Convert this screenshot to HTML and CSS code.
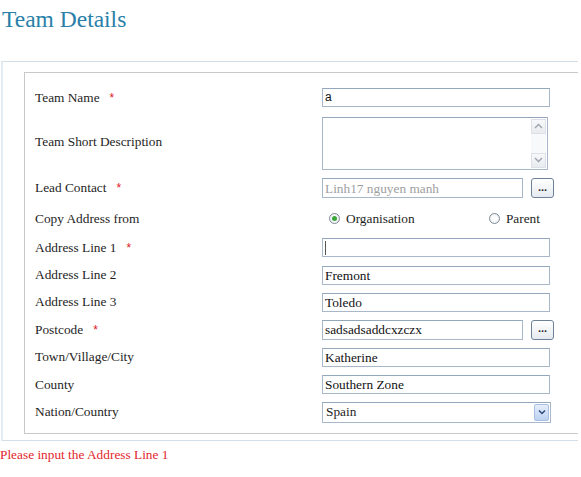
FILE: index.html
```html
<!DOCTYPE html>
<html>
<head>
<meta charset="utf-8">
<title>Team Details</title>
<link rel="stylesheet" href="styles.css">
</head>
<body>
<h1 class="title">Team Details</h1>
<div class="panel">
  <div class="inner">
    <div class="form">
      <div class="label">Team Name<span class="req">*</span></div>
      <div class="ctrl"><div class="field sans">a</div></div>

      <div class="label">Team Short Description</div>
      <div class="ctrl">
        <div class="textarea">
          <div class="scrollbar">
            <span class="sbtn"><svg width="9" height="6" viewBox="0 0 9 6"><path d="M1 5 L4.5 1.5 L8 5" fill="none" stroke="#9aa3ad" stroke-width="1.3"/></svg></span>
            <span class="sbtn"><svg width="9" height="6" viewBox="0 0 9 6"><path d="M1 1 L4.5 4.5 L8 1" fill="none" stroke="#9aa3ad" stroke-width="1.3"/></svg></span>
          </div>
        </div>
      </div>

      <div class="label">Lead Contact<span class="req">*</span></div>
      <div class="ctrl">
        <div class="field short muted">Linh17 nguyen manh</div>
        <button class="pick">...</button>
      </div>

      <div class="label">Copy Address from</div>
      <div class="ctrl">
        <div class="radios">
          <span class="ropt"><span class="radio on"></span>Organisation</span>
          <span class="ropt"><span class="radio"></span>Parent</span>
        </div>
      </div>

      <div class="label">Address Line 1<span class="req">*</span></div>
      <div class="ctrl"><div class="field"><span class="caret"></span></div></div>

      <div class="label">Address Line 2</div>
      <div class="ctrl"><div class="field">Fremont</div></div>

      <div class="label">Address Line 3</div>
      <div class="ctrl"><div class="field">Toledo</div></div>

      <div class="label">Postcode<span class="req">*</span></div>
      <div class="ctrl">
        <div class="field short">sadsadsaddcxzczx</div>
        <button class="pick">...</button>
      </div>

      <div class="label">Town/Village/City</div>
      <div class="ctrl"><div class="field">Katherine</div></div>

      <div class="label">County</div>
      <div class="ctrl"><div class="field">Southern Zone</div></div>

      <div class="label">Nation/Country</div>
      <div class="ctrl">
        <div class="select">
          <span class="sval">Spain</span>
          <span class="drop"><svg width="8" height="6" viewBox="0 0 8 6"><path d="M1 1.5 L4 4.5 L7 1.5" fill="none" stroke="#2c4a7a" stroke-width="1.5"/></svg></span>
        </div>
      </div>
    </div>
  </div>
</div>
<p class="error">Please input the Address Line 1</p>
</body>
</html>
```
FILE: styles.css
```css
* { box-sizing: border-box; }
body {
  margin: 0;
  font-family: "Liberation Serif", "Times New Roman", serif;
  font-size: 13.33px;
  color: #1e1e1e;
  background: #fff;
  width: 581px;
  overflow: hidden;
}
.title {
  margin: 5px 0 0 2px;
  font-weight: normal;
  font-size: 23.5px;
  line-height: 28px;
  color: #2a80a8;
}
.panel {
  margin: 28px 0 0 1px;
  width: 577px;
  border: 1px solid #d3e0e9;
  border-right: none;
  border-left: 2px solid #e2ecf3;
  padding: 10px 0 6px 21px;
}
.inner {
  border: 1px solid #c9c9c9;
  border-right: none;
  padding: 11px 0 7px 10px;
}
.form {
  display: grid;
  grid-template-columns: 287px 1fr;
  grid-template-rows: 27px 62px 30px 31px repeat(7, 27.4px);
  align-items: center;
}
.label {
  line-height: 16px;
  white-space: nowrap;
}
.req {
  color: #e0141e;
  font-family: "Liberation Sans", Arial, sans-serif;
  font-size: 12px;
  margin-left: 10px;
}
.ctrl {
  display: flex;
  align-items: center;
}
.field {
  width: 228px;
  height: 19px;
  border: 1px solid #a8b8ca;
  border-top-color: #94a8bd;
  padding: 0 2px;
  line-height: 17px;
  white-space: nowrap;
  overflow: hidden;
  color: #111;
  display: flex;
  align-items: center;
}
.field.sans {
  font-family: "Liberation Sans", Arial, sans-serif;
  font-size: 12px;
}
.field.short { width: 201px; height: 20px; }
.field.muted { color: #a0a0a0; }
.caret {
  width: 1px;
  height: 14px;
  background: #555;
}
.pick {
  margin-left: 8px;
  width: 23px;
  height: 20px;
  padding: 0 0 3px;
  border: 1px solid #6d8299;
  border-radius: 3px;
  background: linear-gradient(#ffffff, #e6eaef);
  font-family: "Liberation Sans", Arial, sans-serif;
  font-size: 11px;
  font-weight: bold;
  color: #222;
  line-height: 14px;
}
.textarea {
  width: 226px;
  height: 53px;
  margin-top: 2px;
  border: 1px solid #a8b8ca;
  border-top-color: #94a8bd;
  display: flex;
  justify-content: flex-end;
  padding: 1px;
}
.scrollbar {
  width: 15px;
  background: #f8f9fa;
  display: flex;
  flex-direction: column;
  justify-content: space-between;
}
.sbtn {
  height: 15px;
  border: 1px solid #dde1e6;
  background: linear-gradient(#f7f8fa, #e8ebef);
  display: flex;
  align-items: center;
  justify-content: center;
}
.radios {
  width: 218px;
  padding-left: 7px;
  display: flex;
  justify-content: space-between;
  align-items: center;
}
.ropt {
  display: flex;
  align-items: center;
  gap: 6px;
}
.radio {
  width: 11px;
  height: 11px;
  border-radius: 50%;
  border: 1px solid #7f8c99;
  background: radial-gradient(circle, #ffffff 30%, #dfe4ea 100%);
  display: flex;
  align-items: center;
  justify-content: center;
}
.radio.on::after {
  content: "";
  width: 5px;
  height: 5px;
  border-radius: 50%;
  background: #39a739;
}
.select {
  width: 229px;
  height: 21px;
  border: 1px solid #a8b8ca;
  border-top-color: #94a8bd;
  display: flex;
  align-items: center;
  padding: 1px;
}
.sval {
  flex: 1;
  padding-left: 2px;
}
.drop {
  width: 15px;
  height: 100%;
  border: 1px solid #a9bfe0;
  border-radius: 2px;
  background: linear-gradient(#e6eefb, #bcd2f2);
  display: flex;
  align-items: center;
  justify-content: center;
}
.error {
  margin: 6px 0 0;
  line-height: 16px;
  color: #e3262c;
}
```
